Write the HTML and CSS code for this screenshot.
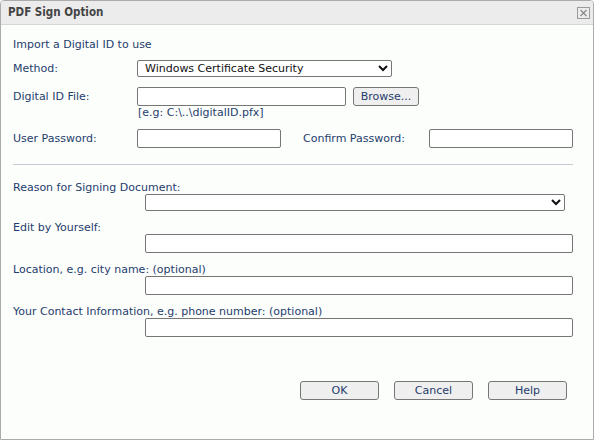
FILE: index.html
```html
<!DOCTYPE html>
<html>
<head>
<meta charset="utf-8">
<link rel="stylesheet" href="styles.css">
</head>
<body>
<div class="dialog">
  <div class="titlebar">
    <span class="title">PDF Sign Option</span>
    <svg class="close" width="13" height="12" viewBox="0 0 13 12">
      <rect x="0.5" y="0.5" width="12" height="11" fill="none" stroke="#9a9a9a"/>
      <path d="M3.5 3 L9.5 9 M9.5 3 L3.5 9" stroke="#8a8a8a" stroke-width="1.2"/>
    </svg>
  </div>
  <div class="content">
    <div class="heading">Import a Digital ID to use</div>
    <div class="row row-method">
      <span class="lbl">Method:</span>
      <select class="sel-method"><option>Windows Certificate Security</option></select>
    </div>
    <div class="row row-file">
      <span class="lbl">Digital ID File:</span>
      <input class="in in-file" type="text">
      <button class="btn btn-browse">Browse...</button>
    </div>
    <div class="hint">[e.g: C:\..\digitalID.pfx]</div>
    <div class="row row-pw">
      <span class="lbl">User Password:</span>
      <input class="in in-pw" type="password">
      <span class="lbl2">Confirm Password:</span>
      <input class="in in-pw" type="password">
    </div>
    <div class="sep"></div>
    <div class="field first">
      <div class="flabel">Reason for Signing Document:</div>
      <select class="sel-reason"><option></option></select>
    </div>
    <div class="field">
      <div class="flabel">Edit by Yourself:</div>
      <input class="in in-wide" type="text">
    </div>
    <div class="field">
      <div class="flabel">Location, e.g. city name: (optional)</div>
      <input class="in in-wide" type="text">
    </div>
    <div class="field">
      <div class="flabel">Your Contact Information, e.g. phone number: (optional)</div>
      <input class="in in-wide" type="text">
    </div>
    <div class="footer">
      <button class="btn btn-foot">OK</button>
      <button class="btn btn-foot">Cancel</button>
      <button class="btn btn-foot">Help</button>
    </div>
  </div>
</div>
</body>
</html>
```

FILE: styles.css
```css
html, body {
  margin: 0;
  padding: 0;
  background: #ffffff;
}
body {
  font-family: "DejaVu Sans", sans-serif;
  font-size: 11px;
  color: #1f3d6c;
}
.dialog {
  box-sizing: border-box;
  width: 594px;
  height: 440px;
  border: 1px solid #ababab;
  border-radius: 4px 4px 0 0;
  background: #fcfefc;
  display: flex;
  flex-direction: column;
  overflow: hidden;
}
.titlebar {
  box-sizing: border-box;
  height: 24px;
  background: #ececec;
  border-bottom: 1px solid #d6d6d6;
  display: flex;
  align-items: center;
  justify-content: space-between;
  padding: 0 3px 0 7px;
}
.title {
  font-family: "DejaVu Sans Condensed", "DejaVu Sans", sans-serif;
  font-weight: bold;
  font-size: 11.5px;
  color: #444444;
  position: relative;
  top: -1px;
}
.close {
  display: block;
  margin-top: 1px;
}
.content {
  display: flex;
  flex-direction: column;
  padding: 13px 0 0 12px;
}
.heading {
  line-height: 13px;
  height: 13px;
}
.row {
  display: flex;
  align-items: center;
}
.lbl {
  width: 124px;
  flex: none;
}
.row-method {
  margin-top: 9px;
}
.row-file {
  margin-top: 10px;
}
.row-pw {
  margin-top: 10px;
}
.lbl2 {
  margin-left: 22px;
  width: 126px;
}
select {
  font-family: "DejaVu Sans", sans-serif;
  font-size: 11px;
  color: #111;
  box-sizing: border-box;
  height: 17px;
  border: 1px solid #767676;
  border-radius: 2px;
  background: #ffffff;
  padding: 0 0 0 3px;
  margin: 0;
}
.sel-method {
  width: 255px;
}
.in {
  box-sizing: border-box;
  height: 19px;
  border: 1px solid #767676;
  border-radius: 2px;
  background: #ffffff;
  padding: 0 3px;
  margin: 0;
  font-family: "DejaVu Sans", sans-serif;
  font-size: 11px;
}
.in-file {
  width: 209px;
}
.in-pw {
  width: 144px;
}
.in-wide {
  width: 428px;
  margin-left: 132px;
}
.btn {
  box-sizing: border-box;
  height: 19px;
  border: 1px solid #767676;
  border-radius: 3px;
  background: #efefef;
  color: #1f3d6c;
  font-family: "DejaVu Sans", sans-serif;
  font-size: 11px;
  padding: 0;
  margin: 0;
}
.btn-browse {
  width: 66px;
  margin-left: 7px;
}
.hint {
  margin-left: 125px;
  line-height: 12px;
  height: 12px;
  margin-top: 1px;
}
.sep {
  height: 1px;
  width: 560px;
  background: #c6cad2;
  margin-top: 16px;
}
.field {
  display: flex;
  flex-direction: column;
  margin-top: 10px;
}
.field.first {
  margin-top: 16px;
}
.flabel {
  line-height: 13px;
  height: 13px;
}
.sel-reason {
  width: 420px;
  margin-left: 132px;
}
.footer {
  display: flex;
  gap: 15px;
  margin-top: 44px;
  margin-left: 287px;
}
.btn-foot {
  width: 79px;
}
```
